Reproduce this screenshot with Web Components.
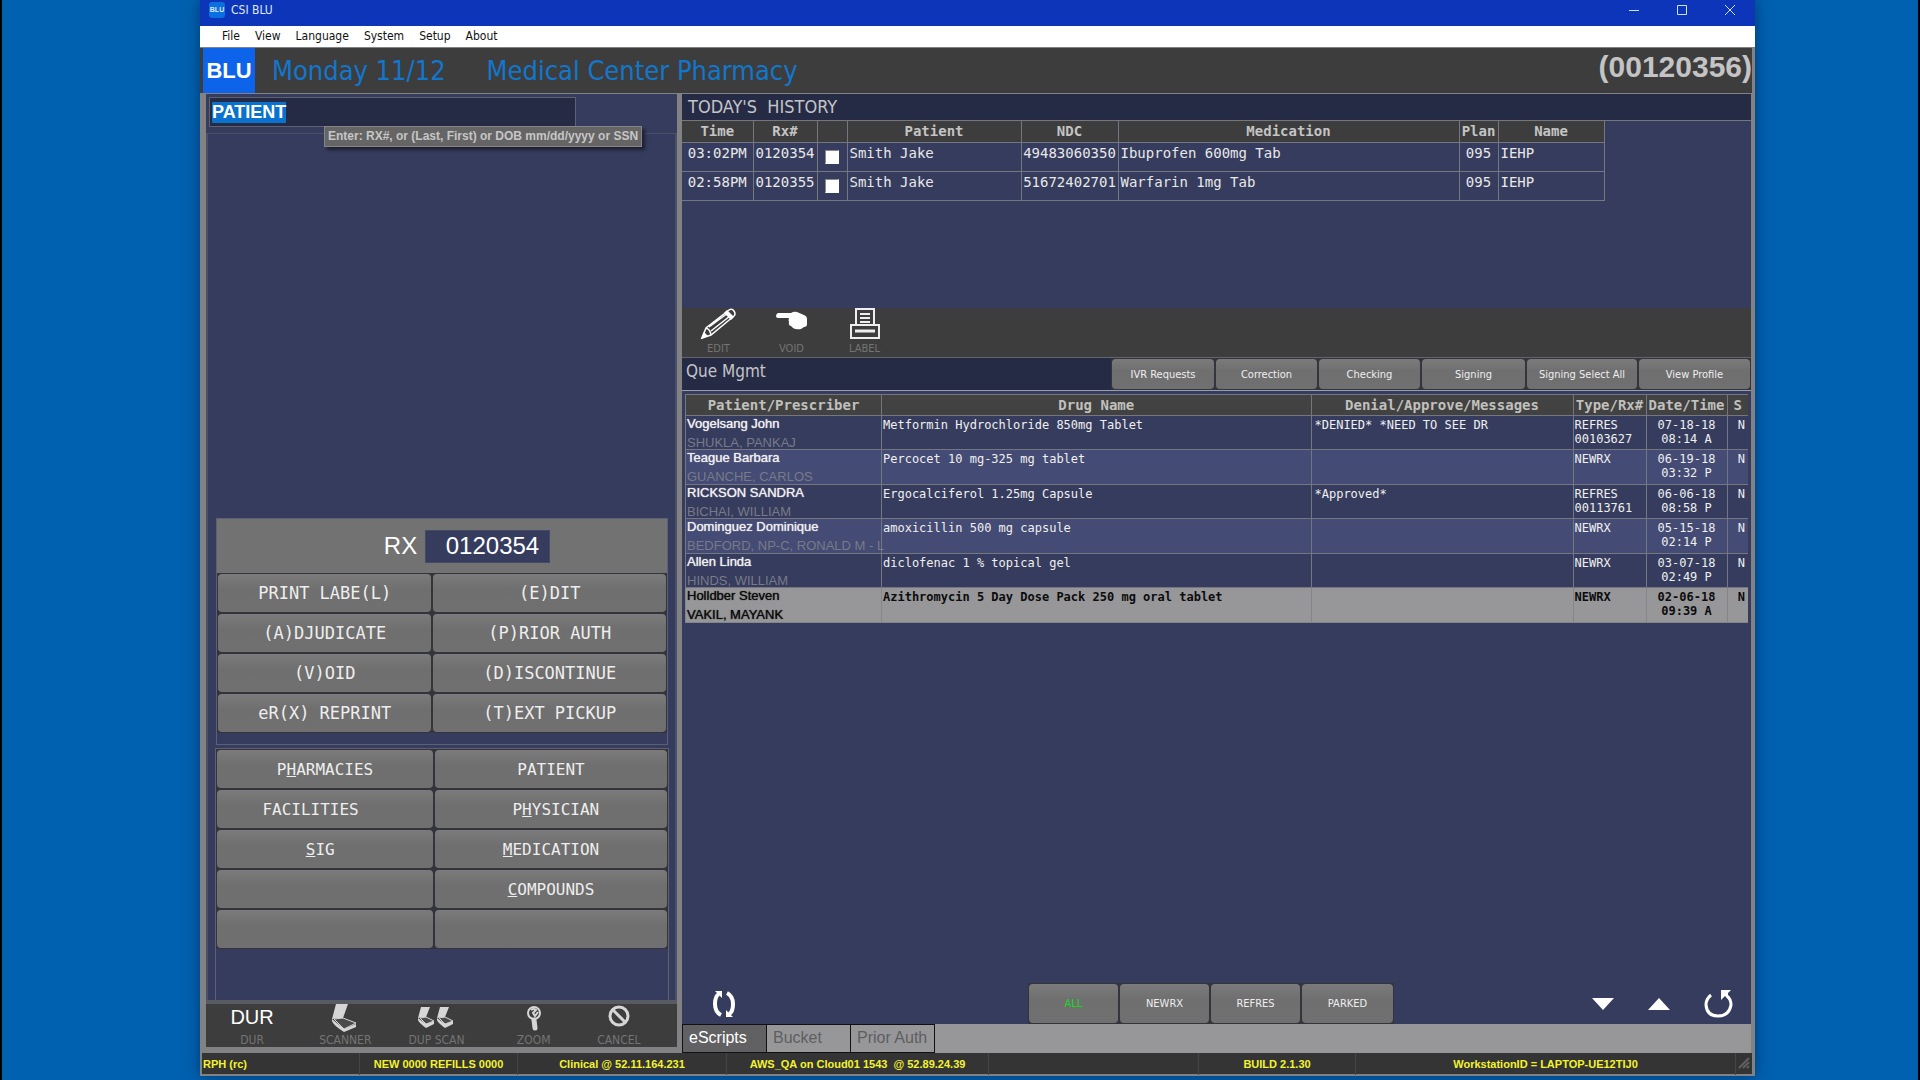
<!DOCTYPE html>
<html lang="en">
<head>
<meta charset="utf-8">
<title>CSI BLU</title>
<style>
  :root {
    --ui: "DejaVu Sans Condensed", "Noto Sans", sans-serif;
    --arial: "Liberation Sans", Arial, sans-serif;
    --mono: "DejaVu Sans Mono", "Liberation Mono", monospace;
    --panel: #363c5d;
    --panel-dark: #262b45;
    --bar: #3d3d3d;
    --frame: #828285;
    --line: #74777f;
  }
  body {
    margin: 0;
    min-height: 100vh;
    box-sizing: border-box;
    padding: 0 163px 4px 198px;
    border: solid #000;
    border-width: 0 2px;
    background: #0061b0;
    display: flex;
    flex-direction: column;
  }
</style>
</head>
<body>
<app-window></app-window>

<script>
const ICONS = {
  edit: `<svg width="40" height="32" viewBox="0 0 40 32" fill="none" stroke="#fff" stroke-width="1.5">
    <path d="M3 30 7 20 30 2q3-2 5 1t0 5L12 27z M7 20q4 1 5 7 M10 19 29 5 M12 23 31 8"/>
    <path d="M3 30l2-5 3 3z M26 5l6 6 2-2-6-6z" fill="#fff"/></svg>`,
  void: `<svg width="34" height="32" viewBox="0 0 34 32" fill="#fff">
    <path d="M3 5h13q3-2 6-1l7 3q3 1 3 4v5q0 3-3 3l-3 2q-5 1-8-1l-2-2q-3-1-2-4-1-2 0-4H3q-2 0-2-2t2-3z"/></svg>`,
  label: `<svg width="32" height="32" viewBox="0 0 32 32" fill="none" stroke="#eee" stroke-width="2">
    <path d="M7 16V1h18v15 M11 6h10 M11 10h10 M11 14h10"/>
    <rect x="2" y="17" width="28" height="13"/><path d="M6 23h20" stroke-width="3"/></svg>`,
  scanner: `<svg width="28" height="28" viewBox="0 0 28 28" fill="#d6d6d6">
    <path d="M5 0h12L12 14 1 15z"/><path d="M1 15l12 10 12-5v3l-12 5Q2 21 1 17z"/>
    <path d="M3 15l9-1 13 5-12 6z" fill="#4b4b4b" stroke="#d6d6d6"/></svg>`,
  dup: `<svg width="38" height="28" viewBox="0 0 38 28" fill="#d6d6d6">
    <g id="s"><path d="M4 3h9L9 13l-8 1z M1 14l8 6 8-3v3l-8 4q-7-5-8-8z"/><path d="M3 14l6-1 8 4-8 3z" fill="#4b4b4b" stroke="#d6d6d6"/></g>
    <use href="#s" x="19"/></svg>`,
  zoom: `<svg width="22" height="28" viewBox="0 0 22 28" fill="none" stroke="#d6d6d6">
    <circle cx="11" cy="9" r="6" stroke-width="2"/><path d="M11 16l1 8" stroke-width="5" stroke-linecap="round"/>
    <path d="M8 6q3-2 5 0l-3 3 2 3 3-4" stroke-width="2"/></svg>`,
  cancel: `<svg width="26" height="28" viewBox="0 0 26 28" fill="none" stroke="#d6d6d6" stroke-width="3">
    <circle cx="13" cy="12" r="9"/><path d="M7 6l12 12"/></svg>`,
  sync: `<svg width="26" height="30" viewBox="0 0 26 30" fill="none" stroke="#fff" stroke-width="4">
    <path d="M10 26Q4 23 4 15T8 5"/><path d="M16 4q6 3 6 11t-4 10"/>
    <path d="M4 2h7v7z M22 28h-7v-7z" fill="#fff" stroke="none"/></svg>`,
  down: `<svg width="22" height="12" viewBox="0 0 22 12" fill="#fff"><path d="M0 0h22L11 12z"/></svg>`,
  up: `<svg width="22" height="12" viewBox="0 0 22 12" fill="#fff"><path d="M0 12h22L11 0z"/></svg>`,
  reload: `<svg width="30" height="28" viewBox="0 0 30 28" fill="none" stroke="#fff" stroke-width="3">
    <path d="M7 5q-5 4-5 10 1 11 12 11t13-11q0-6-4-9"/><path d="M17 0h10l-3 3v6l-3-3-4 4z" fill="#fff" stroke="none"/></svg>`,
};

class BaseElement extends HTMLElement {
  constructor() {
    super();
    this.attachShadow({ mode: "open" });
  }

  connectedCallback() {
    this.shadowRoot.innerHTML = this.render();
  }
}

class TitleBar extends BaseElement {
  render() {
    return `
      <style>
        :host {
          display: flex;
          align-items: center;
          height: 26px;
          padding: 0 1px 6px 9px;
          box-sizing: border-box;
          background: #0d35b9;
          color: #dfe8ff;
          font: 12px var(--ui);
        }
        .badge {
          width: 16px;
          margin-right: 6px;
          border-radius: 3px;
          background: #0a6fe0;
          text-align: center;
          font: bold 7px/16px var(--arial);
        }
        .name { flex: 1; }
        button {
          width: 48px;
          height: 20px;
          padding: 0;
          border: 0;
          background: none;
        }
        svg { display: block; margin: auto; }
      </style>
      <span class="badge">BLU</span>
      <span class="name"><slot></slot></span>
      <button aria-label="Minimize"><svg width="12" height="12" stroke="#cfe0ff"><path d="M1 6.5h10"/></svg></button>
      <button aria-label="Maximize"><svg width="12" height="12" fill="none" stroke="#cfe0ff"><path d="M1.5 1.5h9v9h-9z"/></svg></button>
      <button aria-label="Close"><svg width="12" height="12" stroke="#cfe0ff"><path d="M1 1l10 10M11 1L1 11"/></svg></button>
    `;
  }
}

class MenuBar extends BaseElement {
  render() {
    const items = ["File", "View", "Language", "System", "Setup", "About"];
    return `
      <style>
        :host { display: block; background: #fff; }
        nav {
          display: flex;
          gap: 15px;
          height: 21px;
          padding-left: 22px;
        }
        button {
          padding: 0;
          border: 0;
          background: none;
          color: #111;
          font: 12px/21px var(--ui);
        }
      </style>
      <nav>${items.map((item) => `<button>${item}</button>`).join("")}</nav>
    `;
  }
}

class AppHeader extends BaseElement {
  render() {
    return `
      <style>
        :host {
          display: flex;
          align-items: center;
          height: 47px;
          box-sizing: border-box;
          padding-left: 3px;
          border: solid var(--frame);
          border-width: 1px 3px 1px 0;
          background: var(--bar);
          color: #1277cc;
          font: 27px var(--ui);
        }
        .logo {
          width: 52px;
          margin-right: 17px;
          background: #0d63ea;
          color: #fff;
          text-align: center;
          font: bold 22px/45px var(--arial);
        }
        .store { flex: 1; padding-left: 41px; }
        .number {
          align-self: flex-start;
          color: #c4c4c4;
          font: bold 30px/38px var(--arial);
        }
      </style>
      <span class="logo">BLU</span>
      <span>Monday 11/12</span>
      <span class="store">Medical Center Pharmacy</span>
      <span class="number">(00120356)</span>
    `;
  }
}

// Key with a grey face, its caption comes from the slot
class ActionKey extends BaseElement {
  render() {
    return `
      <style>
        :host { display: flex; }
        button {
          flex: 1;
          min-width: 0;
          padding: 0;
          border: 0;
          border-radius: 4px;
          background: linear-gradient(#7b7b7b, #6f6f6f 40%, #707070);
          color: inherit;
          font: inherit;
          white-space: pre;
        }
      </style>
      <button><slot></slot></button>
    `;
  }
}

class KeyPad extends BaseElement {
  render() {
    return `
      <style>
        :host {
          display: grid;
          grid-template-columns: var(--columns, 217fr 233fr);
          grid-auto-rows: var(--key-height, 38px);
          gap: 2px;
          padding: 1px;
          background: #33343c;
          color: #eee;
          font: 16px var(--mono);
        }
      </style>
      <slot></slot>
    `;
  }
}

// Icon over a small caption
class ToolButton extends BaseElement {
  render() {
    const icon = this.getAttribute("icon");
    return `
      <style>
        :host { display: flex; }
        button {
          flex: 1;
          min-width: 0;
          padding: 0;
          border: 0;
          background: none;
          color: #747474;
          font: var(--caption, 11px/16px) var(--ui);
        }
        .icon {
          display: flex;
          justify-content: center;
          align-items: flex-start;
          height: var(--icon-height, 28px);
          color: #fff;
          font: 20px/26px var(--arial);
        }
      </style>
      <button><span class="icon">${ICONS[icon] || icon}</span><slot></slot></button>
    `;
  }
}

class PatientSearch extends BaseElement {
  render() {
    return `
      <style>
        :host { display: block; position: relative; padding: 3px 3px 0; }
        input {
          display: block;
          width: 79%;
          height: 30px;
          box-sizing: border-box;
          padding: 0 2px;
          border: 1px solid #5f626c;
          outline: 0;
          background: var(--panel-dark);
          color: #fff;
          font: bold 18px/26px var(--arial);
        }
        input::selection { background: #0b72cd; color: #fff; }
        .tip {
          position: absolute;
          left: 118px;
          top: 32px;
          padding: 0 3px;
          border: 1px solid #858585;
          background: #656565;
          box-shadow: 3px 3px 3px #1d2030;
          color: #c6c6c6;
          font: bold 12px/19px var(--arial);
          white-space: nowrap;
        }
      </style>
      <input id="search" value="PATIENT" aria-label="Patient" aria-describedby="tip">
      <div class="tip" id="tip" role="tooltip">Enter: RX#, or (Last, First) or DOB mm/dd/yyyy or SSN</div>
    `;
  }

  connectedCallback() {
    super.connectedCallback();
    const input = this.shadowRoot.querySelector("input");
    input.focus();
    input.select();
  }
}

class RxPanel extends BaseElement {
  render() {
    return `
      <style>
        :host {
          display: block;
          padding-bottom: 11px;
          border: 1px solid #5c6072;
        }
        .head {
          display: flex;
          justify-content: center;
          align-items: center;
          gap: 8px;
          height: 54px;
          padding-left: 50px;
          background: #727272;
          color: #fff;
          font: 24px var(--arial);
        }
        input {
          width: 125px;
          height: 33px;
          box-sizing: border-box;
          padding: 0 10px 0 0;
          border: 1px solid #454a66;
          background: var(--panel);
          color: #fff;
          font: 24px var(--arial);
          text-align: right;
        }
        key-pad { --columns: 213fr 232fr; font-size: 17px; }
      </style>
      <div class="head">
        <label for="rx">RX</label>
        <input id="rx" value="0120354">
      </div>
      <key-pad>
        <action-key>PRINT LABE(L)</action-key><action-key>(E)DIT</action-key>
        <action-key>(A)DJUDICATE</action-key><action-key>(P)RIOR AUTH</action-key>
        <action-key>(V)OID</action-key><action-key>(D)ISCONTINUE</action-key>
        <action-key>eR(X) REPRINT</action-key><action-key>(T)EXT PICKUP</action-key>
      </key-pad>
    `;
  }
}

class LeftPanel extends BaseElement {
  render() {
    return `
      <style>
        :host {
          display: flex;
          flex-direction: column;
          border: solid var(--frame);
          border-width: 0 3px 6px 6px;
          background: var(--panel);
        }
        .work {
          flex: 1;
          display: flex;
          flex-direction: column;
          margin-top: 6px;
          padding: 0 6px 0 7px;
          border: solid #4b5069;
          border-width: 1px 2px 0;
        }
        .space { flex: 1; }
        rx-panel { margin: 0 1px 3px; }
        .lookups { border: 1px solid #5c6072; border-bottom: 0; padding-bottom: 51px; }
        .tools {
          display: grid;
          grid-template-columns: 92fr 94fr 88fr 106fr 64fr 26fr;
          border-top: 4px solid #595b62;
          background: var(--bar);
          --caption: 12px/14px;
          --icon-height: 29px;
        }
      </style>
      <patient-search></patient-search>
      <div class="work">
        <div class="space"></div>
        <rx-panel></rx-panel>
        <div class="lookups">
          <key-pad>
            <action-key>P<u>H</u>ARMACIES</action-key><action-key>PATIENT</action-key>
            <action-key>FACILITIES   </action-key><action-key> P<u>H</u>YSICIAN</action-key>
            <action-key><u>S</u>IG </action-key><action-key><u>M</u>EDICATION</action-key>
            <action-key></action-key><action-key><u>C</u>OMPOUNDS</action-key>
            <action-key></action-key><action-key></action-key>
          </key-pad>
        </div>
      </div>
      <div class="tools">
        <tool-button icon="DUR">DUR</tool-button>
        <tool-button icon="scanner">SCANNER</tool-button>
        <tool-button icon="dup">DUP SCAN</tool-button>
        <tool-button icon="zoom">ZOOM</tool-button>
        <tool-button icon="cancel">CANCEL</tool-button>
      </div>
    `;
  }
}

class HistoryTable extends BaseElement {
  render() {
    const rows = [
      ["03:02PM", "0120354", "Smith Jake", "49483060350", "Ibuprofen 600mg Tab", "095", "IEHP"],
      ["02:58PM", "0120355", "Smith Jake", "51672402701", "Warfarin 1mg Tab", "095", "IEHP"],
    ];
    const widths = [71, 64, 30, 174, 97, 341, 39, 106];
    return `
      <style>
        :host { display: block; min-height: 188px; background: var(--panel); border-top: 1px solid var(--line); box-sizing: border-box; }
        table {
          width: 922px;
          table-layout: fixed;
          border-collapse: collapse;
          color: #e8e8e8;
          font: 14px/18px var(--mono);
        }
        th, td {
          box-sizing: border-box;
          padding: 1px 2px;
          border: solid var(--line);
          border-width: 0 1px 1px 0;
          white-space: nowrap;
        }
        th { height: 21px; padding: 0; background: var(--bar); color: #c4c4c4; }
        td { height: 29px; vertical-align: top; }
        .mid { text-align: center; padding: 1px 0; }
        input {
          appearance: none;
          display: block;
          width: 14px;
          height: 14px;
          margin: 6px auto 0;
          border: 1px solid;
          border-color: #8a8a8a #fff #fff #8a8a8a;
          background: #fff;
        }
      </style>
      <table>
        <colgroup>${widths.map((w) => `<col style="width: ${w}px">`).join("")}</colgroup>
        <thead><tr><th>Time</th><th>Rx#</th><th></th><th>Patient</th><th>NDC</th><th>Medication</th><th>Plan</th><th>Name</th></tr></thead>
        <tbody>
          ${rows.map(([time, rx, patient, ndc, drug, plan, name]) => `
            <tr>
              <td class="mid">${time}</td><td class="mid">${rx}</td>
              <td class="mid"><input type="checkbox" aria-label="Select ${rx}"></td>
              <td>${patient}</td><td class="mid">${ndc}</td><td>${drug}</td>
              <td class="mid">${plan}</td><td>${name}</td>
            </tr>`).join("")}
        </tbody>
      </table>
    `;
  }
}

class QueueTable extends BaseElement {
  render() {
    const rows = [
      ["Vogelsang John", "SHUKLA, PANKAJ", "Metformin Hydrochloride 850mg Tablet", "*DENIED* *NEED TO SEE DR", "REFRES", "00103627", "07-18-18", "08:14 A"],
      ["Teague Barbara", "GUANCHE, CARLOS", "Percocet 10 mg-325 mg tablet", "", "NEWRX", "", "06-19-18", "03:32 P"],
      ["RICKSON SANDRA", "BICHAI, WILLIAM", "Ergocalciferol 1.25mg Capsule", "*Approved*", "REFRES", "00113761", "06-06-18", "08:58 P"],
      ["Dominguez Dominique", "BEDFORD, NP-C, RONALD M - L", "amoxicillin 500 mg capsule", "", "NEWRX", "", "05-15-18", "02:14 P"],
      ["Allen Linda", "HINDS, WILLIAM", "diclofenac 1 % topical gel", "", "NEWRX", "", "03-07-18", "02:49 P"],
      ["Holldber Steven", "VAKIL, MAYANK", "Azithromycin 5 Day Dose Pack 250 mg oral tablet", "", "NEWRX", "", "02-06-18", "09:39 A"],
    ];
    const widths = ["196px", "auto", "262px", "73px", "81px", "21px"];
    return `
      <style>
        :host { display: block; padding: 3px 3px 0; }
        table {
          width: 100%;
          table-layout: fixed;
          border-collapse: collapse;
          color: #f0f0f0;
          font: 12px/14px var(--mono);
        }
        th, td {
          box-sizing: border-box;
          border: solid var(--line);
          border-width: 1px 0 1px 1px;
          white-space: nowrap;
        }
        th { height: 21px; padding: 0; background: #424242; color: #c0c0bc; font-size: 14px; }
        td { height: 34px; padding: 2px 1px; vertical-align: top; }
        tr:nth-child(even) td { height: 35px; background: #444b74; }
        .who { padding: 0 0 0 1px; font: 13px/15px var(--arial); text-shadow: 0 0 1px #f0f0f0; }
        .who span { display: block; padding-top: 5px; color: #777b88; line-height: 13px; text-shadow: none; }
        .message { padding-left: 3px; }
        .date { text-align: center; }
        .status { padding: 2px 3px; text-align: right; }
        tbody tr.selected td { background: #97979a; color: #0c0c0c; font-weight: bold; border-color: #85868a; }
        tbody tr.selected .who { font-weight: normal; text-shadow: 0 0 1px #0c0c0c; }
        .selected .who span { color: #0c0c0c; text-shadow: inherit; }
      </style>
      <table>
        <colgroup>${widths.map((w) => `<col style="width: ${w}">`).join("")}</colgroup>
        <thead><tr><th>Patient/Prescriber</th><th>Drug Name</th><th>Denial/Approve/Messages</th><th>Type/Rx#</th><th>Date/Time</th><th>S</th></tr></thead>
        <tbody>
          ${rows.map(([patient, doctor, drug, message, type, rx, date, time], i) => `
            <tr class="${i === rows.length - 1 ? "selected" : ""}">
              <td class="who">${patient}<span>${doctor}</span></td>
              <td>${drug}</td><td class="message">${message}</td>
              <td>${type}<br>${rx}</td><td class="date">${date}<br>${time}</td><td class="status">N</td>
            </tr>`).join("")}
        </tbody>
      </table>
    `;
  }
}

class TabStrip extends BaseElement {
  render() {
    return `
      <style>
        :host { display: flex; height: 29px; background: #97979a; }
        button {
          width: 85px;
          margin-right: -1px;
          padding: 0 0 2px 6px;
          border: 1px solid #111;
          background: none;
          color: #5e5e60;
          font: 16px var(--arial);
          text-align: left;
          white-space: nowrap;
        }
        button[aria-selected="true"] { background: #616163; color: #fff; }
      </style>
      <button role="tab" aria-selected="true">eScripts</button>
      <button role="tab" aria-selected="false">Bucket</button>
      <button role="tab" aria-selected="false">Prior Auth</button>
    `;
  }
}

class RightPanel extends BaseElement {
  render() {
    return `
      <style>
        :host {
          display: flex;
          flex-direction: column;
          min-width: 0;
          border: solid var(--frame);
          border-width: 0 4px 0 2px;
          background: var(--panel);
        }
        h2 {
          margin: 0;
          padding-left: 6px;
          color: #c4c4c8;
          font: 18px/26px var(--ui);
          white-space: pre;
        }
        .title { background: var(--panel-dark); }
        .tools {
          display: flex;
          height: 49px;
          background: var(--bar);
          border-bottom: 1px solid #63656c;
          --icon-height: 33px;
        }
        .tools tool-button { width: 73px; }
        .que {
          display: flex;
          justify-content: space-between;
          background: var(--panel-dark);
          border-bottom: 1px solid #999cab;
        }
        .que h2 { padding-left: 4px; font-size: 17px; }
        .que key-pad {
          --columns: 102px 101px 101px 103px 110px 111px;
          --key-height: 30px;
          color: #eee;
          font: 11px var(--ui);
        }
        .space { flex: 1; }
        .foot {
          display: grid;
          grid-template-columns: 347fr auto 358fr;
          align-items: center;
        }
        .foot key-pad {
          --columns: 89px 89px 89px 91px;
          --key-height: 39px;
          font: 11px var(--ui);
        }
        .foot > div { display: flex; align-items: center; }
        .foot button { padding: 0; border: 0; background: none; line-height: 0; }
        .left { padding-left: 29px; }
        .right { justify-content: flex-end; gap: 34px; padding-right: 17px; }
        .all { color: #16d91f; }
      </style>
      <h2 class="title">TODAY'S  HISTORY</h2>
      <history-table></history-table>
      <div class="tools">
        <tool-button icon="edit">EDIT</tool-button>
        <tool-button icon="void">VOID</tool-button>
        <tool-button icon="label">LABEL</tool-button>
      </div>
      <div class="que">
        <h2>Que Mgmt</h2>
        <key-pad>
          <action-key>IVR Requests</action-key>
          <action-key>Correction</action-key>
          <action-key>Checking</action-key>
          <action-key>Signing</action-key>
          <action-key>Signing Select All</action-key>
          <action-key>View Profile</action-key>
        </key-pad>
      </div>
      <queue-table></queue-table>
      <div class="space"></div>
      <div class="foot">
        <div class="left"><button aria-label="Sync">${ICONS.sync}</button></div>
        <key-pad>
          <action-key class="all">ALL</action-key>
          <action-key>NEWRX</action-key>
          <action-key>REFRES</action-key>
          <action-key>PARKED</action-key>
        </key-pad>
        <div class="right">
          <button aria-label="Next">${ICONS.down}</button>
          <button aria-label="Previous">${ICONS.up}</button>
          <button aria-label="Reload">${ICONS.reload}</button>
        </div>
      </div>
      <tab-strip></tab-strip>
    `;
  }
}

class StatusBar extends BaseElement {
  render() {
    return `
      <style>
        :host {
          display: grid;
          grid-template-columns: 157fr 158fr 209fr 262fr 210fr 157fr 380fr 17fr;
          height: 21px;
          border: solid var(--frame);
          border-width: 0 3px 2px 2px;
          background: #343434;
          color: #f3f32c;
          font: bold 11px/22px var(--arial);
          text-align: center;
          white-space: pre;
        }
        span + span { border-left: 1px solid #454545; }
        span:first-of-type { padding-left: 1px; text-align: left; }
        svg { display: block; margin: 4px auto; }
      </style>
      <span>RPH (rc)</span>
      <span>NEW 0000 REFILLS 0000</span>
      <span>Clinical @ 52.11.164.231</span>
      <span>AWS_QA on Cloud01 1543  @ 52.89.24.39</span>
      <span></span>
      <span>BUILD 2.1.30</span>
      <span>WorkstationID = LAPTOP-UE12TIJ0</span>
      <span><svg width="12" height="12" stroke="#606060" stroke-width="2"><path d="M1 11L11 1M5 11l6-6M9 11l2-2"/></svg></span>
    `;
  }
}

class AppWindow extends BaseElement {
  render() {
    return `
      <style>
        :host {
          flex: 1;
          display: flex;
          flex-direction: column;
          box-shadow: 0 0 14px #003a70;
        }
        main {
          flex: 1;
          display: grid;
          grid-template-columns: 480fr 1075fr;
        }
      </style>
      <title-bar>CSI BLU</title-bar>
      <menu-bar></menu-bar>
      <app-header></app-header>
      <main>
        <left-panel></left-panel>
        <right-panel></right-panel>
      </main>
      <status-bar></status-bar>
    `;
  }
}

customElements.define("title-bar", TitleBar);
customElements.define("menu-bar", MenuBar);
customElements.define("app-header", AppHeader);
customElements.define("action-key", ActionKey);
customElements.define("key-pad", KeyPad);
customElements.define("tool-button", ToolButton);
customElements.define("patient-search", PatientSearch);
customElements.define("rx-panel", RxPanel);
customElements.define("left-panel", LeftPanel);
customElements.define("history-table", HistoryTable);
customElements.define("queue-table", QueueTable);
customElements.define("tab-strip", TabStrip);
customElements.define("right-panel", RightPanel);
customElements.define("status-bar", StatusBar);
customElements.define("app-window", AppWindow);
</script>
</body>
</html>
